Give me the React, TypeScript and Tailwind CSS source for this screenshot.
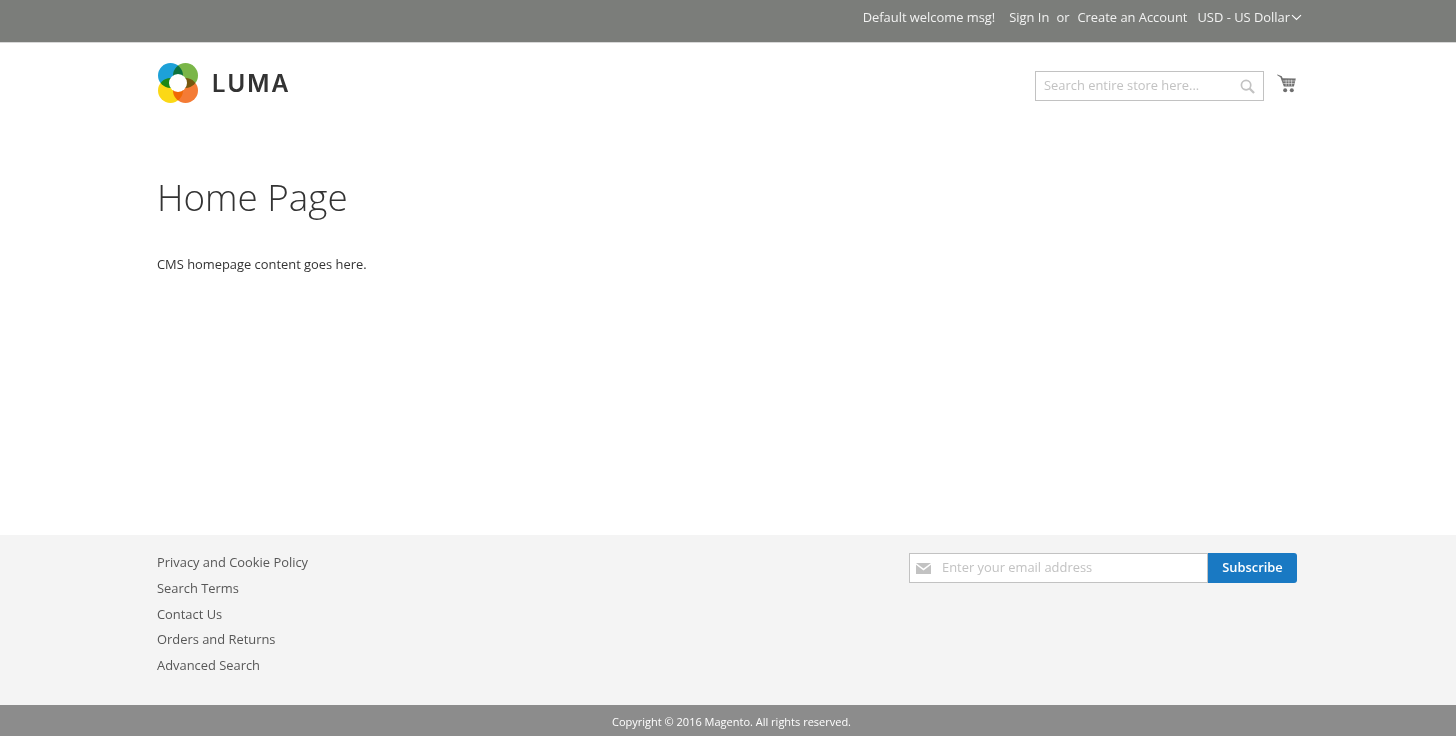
import { FC } from 'react';

const LumaLogo: FC = () => (
  <svg width="40" height="40" viewBox="0 0 40 40" className="block">
    <circle cx="12.5" cy="12.5" r="12.5" fill="#1da1d8" />
    <circle cx="27.5" cy="12.5" r="12.5" fill="#7ab648" className="mix-blend-multiply" />
    <circle cx="12.5" cy="27.5" r="12.5" fill="#fbd816" className="mix-blend-multiply" />
    <circle cx="27.5" cy="27.5" r="12.5" fill="#f47b35" className="mix-blend-multiply" />
    <circle cx="20" cy="20" r="9" fill="white" />
  </svg>
);

const SearchIcon: FC = () => (
  <svg width="15" height="15" viewBox="0 0 16 16" fill="none" stroke="#c2c2c2" strokeWidth="1.8">
    <circle cx="6.5" cy="6.5" r="5" />
    <path d="M10.2 10.2 L15 15" strokeWidth="2.4" />
  </svg>
);

const CartIcon: FC = () => (
  <svg width="19" height="20" viewBox="0 0 20 20" fill="#6f6f6f">
    <path d="M0 0.6 L0.5 0 L5 1.8 L6 4 L19.8 4.2 L17.8 12.6 L7.2 12.6 L3.6 2.8 Z" />
    <circle cx="8.6" cy="16.6" r="2.1" />
    <circle cx="15.6" cy="16.6" r="2.1" />
    <path d="M6 6.8 H19 M6.6 9.4 H18.5 M9.6 5.5 V12 M12.5 5.5 V12 M15.4 5.5 V12" stroke="#fff" strokeWidth="0.6" />
  </svg>
);

const MailIcon: FC = () => (
  <svg width="15" height="11" viewBox="0 0 15 11" fill="#c2c2c2">
    <path d="M0 0 H15 L7.5 5.5 Z" />
    <path d="M0 1.8 L7.5 7.4 L15 1.8 V11 H0 Z" />
  </svg>
);

const ChevronIcon: FC = () => (
  <svg width="11" height="7" viewBox="0 0 11 7" fill="none" stroke="#fff" strokeWidth="1.1" className="ml-[1px] mt-[1px]">
    <path d="M1 1.2 L5.5 5.5 L10 1.2" />
  </svg>
);

const links = ['Privacy and Cookie Policy', 'Search Terms', 'Contact Us', 'Orders and Returns', 'Advanced Search'];

const App: FC = () => (
  <div className="min-h-screen flex flex-col bg-white text-[#333] font-['Open_Sans',sans-serif] text-[12.9px]">
    <header className="h-[43px] shrink-0 bg-[#7b7d7a] border-b border-[#d8d8d8] text-white/90">
      <div className="h-[35px] pr-[154px] flex items-center justify-end">
        <span>Default welcome msg!</span>
        <span className="ml-[14px]">Sign In</span>
        <span className="ml-[7px]">or</span>
        <span className="ml-[8px]">Create an Account</span>
        <span className="ml-[10px] flex items-center">
          USD - US Dollar
          <ChevronIcon />
        </span>
      </div>
    </header>

    <div className="pl-[158px] pr-[160px] h-[70px] shrink-0 flex justify-between">
      <div className="flex items-center h-[81px] -mt-[1px]">
        <LumaLogo />
        <span className="ml-[14px] mt-[2px] text-[#333] font-['Inter',sans-serif] font-semibold text-[24px] tracking-[2px] leading-none">LUMA</span>
      </div>
      <div className="flex items-start pt-[28px]">
        <div className="w-[229px] h-[30px] border border-[#c2c2c2] bg-white flex items-center justify-between pl-[8px] pr-[8px]">
          <span className="text-[#c2c2c2] -mt-[1px]">Search entire store here...</span>
          <SearchIcon />
        </div>
        <div className="ml-[13px] mt-[3px]">
          <CartIcon />
        </div>
      </div>
    </div>

    <main className="flex-1 pl-[157px] pt-[59px]">
      <h1 className="text-[36.8px] font-light leading-[50px] text-[#333]">Home Page</h1>
      <p className="mt-[32px] leading-[20px]">CMS homepage content goes here.</p>
    </main>

    <footer className="h-[170px] shrink-0 bg-[#f4f4f4] pl-[157px] pr-[159px] pt-[17.2px] flex justify-between">
      <ul className="text-[#575757] flex flex-col gap-[5.7px]">
        {links.map((l) => (
          <li key={l} className="leading-[20px]">{l}</li>
        ))}
      </ul>
      <div className="flex h-[30px] mt-[1px]">
        <div className="w-[299px] border border-[#c2c2c2] bg-white flex items-center pl-[6px]">
          <MailIcon />
          <span className="ml-[11px] -mt-[1px] text-[#c2c2c2]">Enter your email address</span>
        </div>
        <div className="w-[89px] pb-[1px] bg-[#1979c3] text-white font-semibold rounded-r-[3px] flex items-center justify-center">Subscribe</div>
      </div>
    </footer>

    <div className="h-[31px] shrink-0 bg-[#8c8c8c] text-white text-[11px] flex items-center justify-center pl-[7px] pt-[4px]">
      Copyright © 2016 Magento. All rights reserved.
    </div>
  </div>
);

export default App;
